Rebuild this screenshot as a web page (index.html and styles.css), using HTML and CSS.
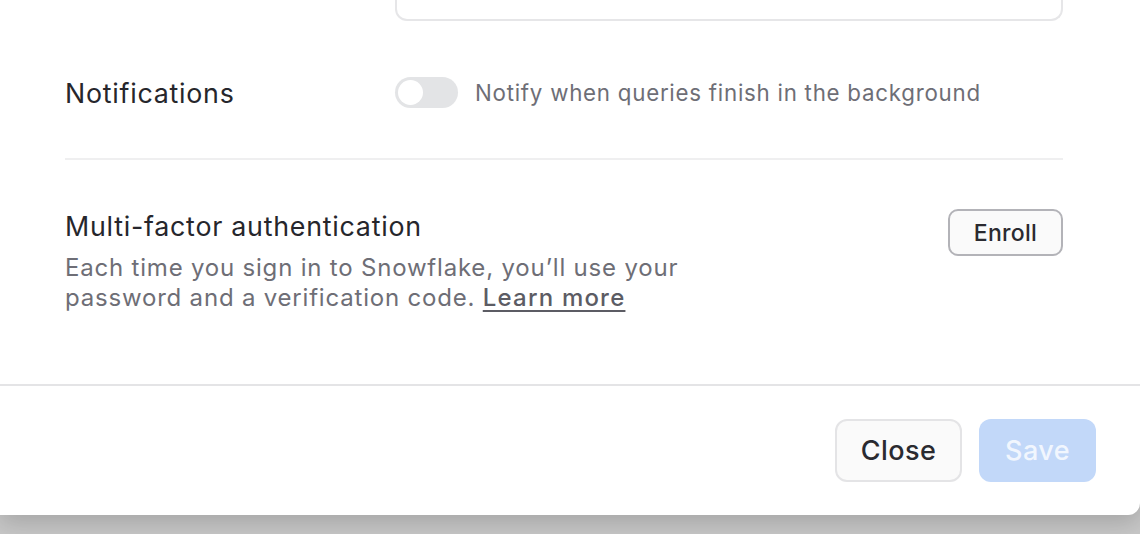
FILE: index.html
```html
<!DOCTYPE html>
<html>
<head>
<meta charset="utf-8">
<link rel="stylesheet" href="styles.css">
</head>
<body>
<div class="modal">
  <div class="modal-body">
    <div class="row row-input">
      <div class="label-col"></div>
      <div class="control-col"><div class="input-stub"></div></div>
    </div>
    <div class="row row-notify">
      <div class="label-col"><span class="label">Notifications</span></div>
      <div class="control-col toggle-line">
        <span class="toggle"><span class="knob"></span></span>
        <span class="hint">Notify when queries finish in the background</span>
      </div>
    </div>
    <div class="divider"></div>
    <div class="mfa">
      <div class="mfa-text">
        <div class="mfa-title">Multi-factor authentication</div>
        <div class="mfa-desc">Each time you sign in to Snowflake, you’ll use your password and a verification code. <a class="link">Learn more</a></div>
      </div>
      <button class="btn btn-enroll">Enroll</button>
    </div>
  </div>
  <div class="modal-footer">
    <button class="btn btn-close">Close</button>
    <button class="btn btn-save">Save</button>
  </div>
</div>
</body>
</html>
```
FILE: styles.css
```css
* { box-sizing: border-box; }
html, body { margin: 0; padding: 0; }
body {
  width: 1140px;
  height: 534px;
  overflow: hidden;
  background: linear-gradient(#aeaeae, #c8c8c8 60px);
  font-family: Inter, "Noto Sans", sans-serif;
  color: #24242a;
}
.modal {
  background: #fff;
  height: 515px;
  border-bottom-right-radius: 12px;
  box-shadow: 0 8px 24px rgba(0,0,0,0.18);
  display: flex;
  flex-direction: column;
}
.modal-body {
  padding: 0 77px 0 65px;
  height: 386px;
  border-bottom: 2px solid #e4e4e6;
}
.row { display: flex; }
.label-col { width: 330px; flex-shrink: 0; }
.control-col { flex: 1; }
.input-stub {
  height: 21px;
  border: 2px solid #e6e6e8;
  border-top: none;
  border-radius: 0 0 12px 12px;
}
.row-notify { margin-top: 56px; align-items: center; height: 31px; }
.label { font-size: 26.8px; font-weight: 400; letter-spacing: 0.75px; color: #26262c; }
.toggle-line { display: flex; align-items: center; gap: 17px; }
.toggle {
  width: 63px; height: 31px; border-radius: 16px;
  background: #e3e4e6; display: flex; align-items: center; padding-left: 3px;
}
.knob { width: 25px; height: 25px; border-radius: 50%; background: #fff; }
.hint { font-size: 22.3px; color: #6e6e76; letter-spacing: 0.75px; }
.divider { height: 2px; background: #efeff0; margin-top: 50px; }
.mfa {
  display: flex; justify-content: space-between; align-items: flex-start;
  padding-top: 47px;
}
.btn-enroll { margin-top: 2px; }
.mfa-title { font-size: 26.8px; font-weight: 400; line-height: 38px; letter-spacing: 0.75px; color: #26262c; }
.mfa-desc {
  width: 680px; font-size: 24px; line-height: 30px; color: #6e6e76;
  margin-top: 8px; letter-spacing: 0.8px;
}
.link { color: #5c5c64; text-decoration: underline; text-decoration-thickness: 2px; text-underline-offset: 4px; font-weight: 500; letter-spacing: 1.2px; }
.btn {
  font-family: Inter, "Noto Sans", sans-serif;
  cursor: pointer;
}
.btn-enroll {
  width: 115px; height: 47px; border: 2px solid #b3b3b8; border-radius: 10px;
  background: #fafafa; color: #2a2a30; font-size: 23px; font-weight: 500; padding: 0;
  letter-spacing: 0.3px;
}
.modal-footer {
  flex: 1; display: flex; justify-content: flex-end; align-items: center;
  gap: 17px; padding-right: 44px; padding-bottom: 0px;
}
.btn-close {
  width: 127px; height: 63px; border: 2px solid #e4e4e6; border-radius: 12px;
  background: #fafafa; color: #2a2a30; font-size: 27px; font-weight: 500; padding: 0;
  letter-spacing: 0.4px;
}
.btn-save {
  width: 117px; height: 63px; border: none; border-radius: 12px;
  background: #c2d8f9; color: #f1f6fe; font-size: 27px; font-weight: 500; padding: 0;
  letter-spacing: 0.4px;
}
```
